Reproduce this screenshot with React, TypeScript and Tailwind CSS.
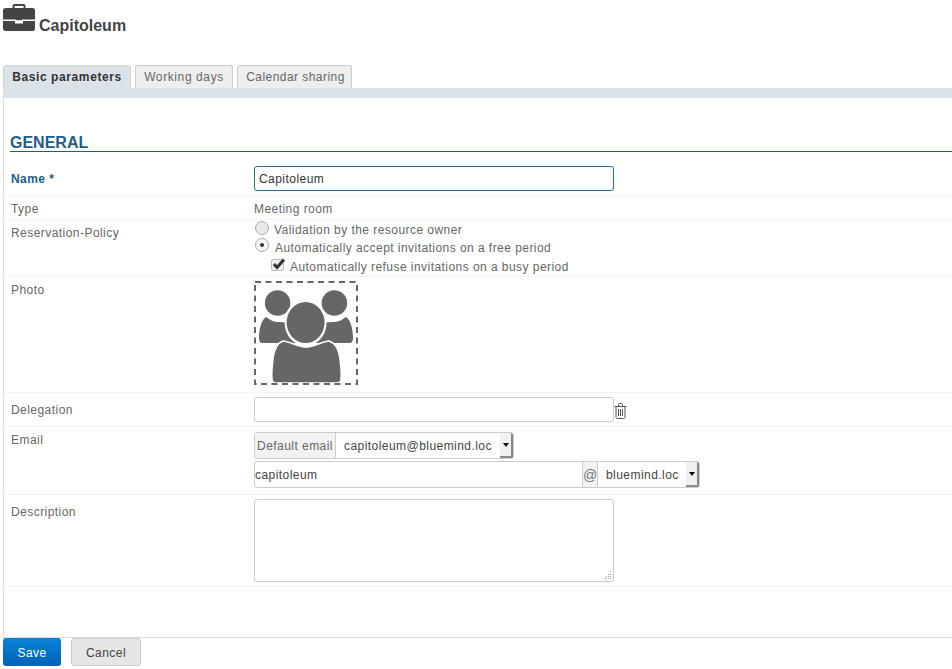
const font = { fontFamily: '"Liberation Sans", Arial, sans-serif' };

function Briefcase() {
  return (
    <svg width="32" height="28" viewBox="0 0 32 28" className="shrink-0 fill-[#444444]">
      <path d="M9.500 5V2.200C9.500 .8 10.500 0 11.800 0h8.400c1.300 0 2.300 .8 2.300 2.200V5h-2V2h-9v3z" />
      <path d="M2.500 4h27C31 4 32 5 32 6.500V15.500H0V6.500C0 5 1 4 2.500 4z" />
      <path d="M0 17h12v2.500h8V17h12v7.500c0 1.500-1 2.500-2.500 2.500h-27C1 27 0 26 0 24.500z" />
      <path d="M13 15h6v1.200h-6z" />
    </svg>
  );
}

function Group() {
  const side = "#666666";
  return (
    <svg width="104" height="104" viewBox="0 0 104 104">
      <path d="M12 36c4 3 8 5 12 5 6 0 10 1 18 1v20H9c-3 0-4-2-4-5 0-8 2-18 7-21z" fill={side} />
      <path d="M92 36c-4 3-8 5-12 5-6 0-10 1-18 1v20h33c3 0 4-2 4-5 0-8-2-18-7-21z" fill={side} />
      <circle cx="23.600" cy="22" r="13.500" fill={side} stroke="white" strokeWidth="1.500" />
      <circle cx="80.400" cy="22" r="13.500" fill={side} stroke="white" strokeWidth="1.500" />
      <path d="M29 60c6 0 15 6 23 6s17-6 23-6c6 2 10 9 11 18 1 8 1.500 15 1 20-.2 2.500-1.500 4-4 4H22c-2.500 0-3.800-1.500-4-4-.5-5 0-12 1-20 1-9 4-16 10-18z" fill={side} stroke="white" strokeWidth="1.500" />
      <ellipse cx="51.600" cy="41.500" rx="21" ry="23.500" fill="white" />
      <ellipse cx="51.600" cy="41.500" rx="19" ry="20.500" fill={side} />
      <rect x="1" y="1" width="102" height="102" fill="none" stroke="#666666" strokeWidth="2" strokeDasharray="6 4.500" />
    </svg>
  );
}

function Trash() {
  return (
    <svg width="13" height="16" viewBox="0 0 13 16" fill="none" stroke="#555555" strokeWidth="1">
      <path d="M.5 3.500h12M4.500 3.500V1.500c0-.6.4-1 1-1h2c.6 0 1 .4 1 1v2M2 3.500v10.500c0 .8.6 1.500 1.500 1.500h6c.9 0 1.500-.7 1.500-1.500V3.500M4.500 6v7M6.500 6v7M8.500 6v7" />
    </svg>
  );
}

function Row({ label, className, labelClass, children }: { label: string; className: string; labelClass?: string; children: React.ReactNode }) {
  return (
    <div className={`flex border-b border-[#f2f2f2] pl-[7px] ${className}`}>
      <div className={`w-[243px] shrink-0 ${labelClass ?? "text-[#666666]"}`}>{label}</div>
      <div className="min-w-0 flex-1">{children}</div>
    </div>
  );
}

function SelectArrow() {
  return (
    <span className="flex h-full w-[13px] shrink-0 items-center justify-center border-r-2 border-b-2 border-[#888888] bg-[#f0f0f0]">
      <span className="mt-px h-0 w-0 border-x-[3px] border-t-[4px] border-x-transparent border-t-black" />
    </span>
  );
}

export default function App() {
  return (
    <div style={font} className="flex h-[669px] w-[952px] flex-col overflow-hidden bg-white text-[12px] tracking-[0.45px] text-[#666666]">
      <div className="flex h-[65px] shrink-0 items-start pt-[4px] pl-[3px]">
        <Briefcase />
        <h1 className="mt-[13px] ml-[4px] text-[16px] leading-[18px] font-bold tracking-normal text-[#444444]">Capitoleum</h1>
      </div>

      <div className="ml-[3px] flex h-[23px] shrink-0 gap-[4px]">
        <div className="w-[128px] rounded-t-[3px] border border-b-0 border-[#cfd6db] bg-[#dce3e8] pt-[3px] text-center leading-[16px] font-bold tracking-[0.6px] text-[#333333]">Basic parameters</div>
        <div className="w-[98px] rounded-t-[3px] border border-b-0 border-[#cccccc] bg-[#eeeeee] pt-[3px] text-center leading-[16px] tracking-[0.6px]">Working days</div>
        <div className="w-[115px] rounded-t-[3px] border border-b-0 border-[#cccccc] bg-[#eeeeee] pt-[3px] pl-[2px] text-center leading-[16px]">Calendar sharing</div>
      </div>
      <div className="ml-[3px] h-[10px] shrink-0 bg-[#dce3e8]" />

      <div className="ml-[3px] flex-1 border-b border-l border-[#dddddd]">
        <h2 className="mt-[35px] ml-[6px] h-[19px] border-b border-[#1f5c8c] text-[16px] leading-[20px] font-bold tracking-normal text-[#1f5c8c]">GENERAL</h2>

        <Row label="Name *" labelClass="mt-[5px] font-bold text-[#1f5c8c]" className="h-[44px] pt-[14px] leading-[16px]">
          <input readOnly value="Capitoleum" style={font} className="h-[25px] w-[360px] rounded-[3px] border border-[#1f6d9c] px-[4px] text-[12px] tracking-[0.45px] text-[#333333] outline-none" />
        </Row>
        <Row label="Type" className="h-[24px] pt-[5px] leading-[16px]">Meeting room</Row>
        <Row label="Reservation-Policy" className="h-[57px] pt-[5px] leading-[16px]">
          <div className="-mt-[4px] flex h-[18px] items-center">
            <span className="-mt-[5px] ml-px h-[14px] w-[14px] rounded-full border border-[#aaaaaa] bg-[#e8e8e8]" />
            <span className="ml-[5px]">Validation by the resource owner</span>
          </div>
          <div className="flex h-[18px] items-center">
            <span className="-mt-[6px] ml-px flex h-[14px] w-[14px] items-center justify-center rounded-full border border-[#aaaaaa] bg-[#f4f4f4]">
              <span className="h-[4px] w-[4px] rounded-full bg-[#333333]" />
            </span>
            <span className="ml-[6px]">Automatically accept invitations on a free period</span>
          </div>
          <div className="ml-[17px] flex h-[19px] items-center">
            <span className="relative -mt-[4px] h-[12px] w-[13px] rounded-[2px] border border-[#bbbbbb] bg-[#eeeeee]">
              <svg width="14" height="12" viewBox="0 0 14 12" className="absolute -top-[2px] left-0">
                <path d="M2 6l3 3.500L12 1.500" fill="none" stroke="#333333" strokeWidth="3" />
              </svg>
            </span>
            <span className="ml-[6px]">Automatically refuse invitations on a busy period</span>
          </div>
        </Row>
        <Row label="Photo" className="h-[116px] pt-[4px] leading-[16px]" labelClass="mt-[1px] text-[#666666]">
          <Group />
        </Row>
        <Row label="Delegation" className="h-[34px] pt-[4px] leading-[16px]" labelClass="mt-[5px] text-[#666666]">
          <div className="flex items-start">
            <div className="h-[25px] w-[360px] rounded-[3px] border border-[#cccccc]" />
            <span className="mt-[6px] flex"><Trash /></span>
          </div>
        </Row>
        <Row label="Email" className="h-[68px] pt-[5px] leading-[16px]">
          <div className="flex h-[27px] w-[260px] items-center overflow-hidden rounded-[3px] border border-[#cccccc]">
            <span className="flex h-full w-[81px] shrink-0 items-center justify-center border-r border-[#cccccc] bg-[#f2f2f2]">Default email</span>
            <span className="flex-1 pl-[8px] text-[#444444]">capitoleum@bluemind.loc</span>
            <SelectArrow />
          </div>
          <div className="mt-[2px] flex h-[27px] w-[446px] items-center overflow-hidden rounded-[3px] border border-[#cccccc]">
            <span className="flex-1 text-[#444444]">capitoleum</span>
            <span className="flex h-full w-[16px] shrink-0 items-center justify-center border-x border-[#cccccc] bg-[#f2f2f2] text-[14px] tracking-normal text-[#777777]">@</span>
            <span className="w-[88px] shrink-0 pl-[8px] text-[#444444]">bluemind.loc</span>
            <SelectArrow />
          </div>
        </Row>
        <Row label="Description" className="h-[92px] pt-[4px] leading-[16px]" labelClass="mt-[5px] text-[#666666]">
          <div className="relative h-[83px] w-[360px] rounded-[3px] border border-[#cccccc]">
            <svg width="9" height="9" viewBox="0 0 9 9" className="absolute right-[1px] bottom-[1px] fill-[#aaaaaa]">
              <path d="M7 0h1v1H7zM5 3h1v1H5zM7 3h1v1H7zM3 5h1v1H3zM5 5h1v1H5zM7 5h1v1H7zM1 7h1v1H1zM3 7h1v1H3zM5 7h1v1H5zM7 7h1v1H7z" />
            </svg>
          </div>
        </Row>
      </div>

      <div className="ml-[3px] flex h-[31px] shrink-0 items-start gap-[10px]">
        <button className="h-[28px] w-[58px] rounded-[3px] bg-gradient-to-b from-[#0a84d8] to-[#0062b8] pt-[1px] text-white">Save</button>
        <button className="h-[28px] w-[70px] rounded-[3px] border border-[#cccccc] bg-[#e6e6e6] pt-[1px] text-[#444444]">Cancel</button>
      </div>
    </div>
  );
}
